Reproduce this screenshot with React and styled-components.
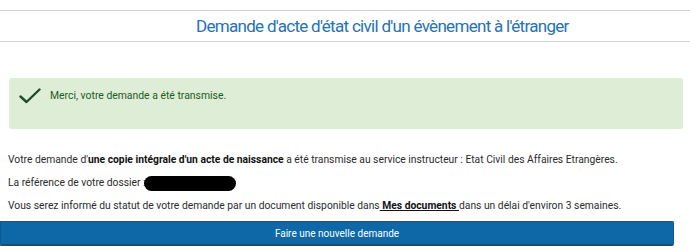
import React from "react";
import styled, { createGlobalStyle } from "styled-components";

const Global = createGlobalStyle`
  html, body { margin: 0; padding: 0; background: #fff; }
  body { font-family: Roboto, "Liberation Sans", sans-serif; }
`;

const Page = styled.div`
  width: 690px;
  height: 252px;
  overflow: hidden;
  padding-top: 10px;
  box-sizing: border-box;
`;

const Header = styled.header`
  border-top: 1px solid #d4d4d4;
  border-bottom: 1px solid #d4d4d4;
  height: 30px;
  display: flex;
  align-items: center;
  padding-left: 196px;
`;

const Title = styled.h1`
  margin: 0;
  font-family: Roboto, "Liberation Sans", sans-serif;
  font-weight: 400;
  font-size: 17px;
  color: #2472b5;
  letter-spacing: -0.7px;
`;

const Alert = styled.div`
  margin: 36px 7px 0 9px;
  height: 51px;
  box-sizing: border-box;
  background: #ddedd6;
  border-radius: 3px;
  display: flex;
  align-items: flex-start;
  padding: 10px 0 0 10px;
  gap: 9px;
`;

const AlertText = styled.span`
  font-size: 10.4px;
  color: #1d5a2a;
  line-height: 14px;
  padding-top: 1px;
`;

const Body = styled.div`
  margin-top: 19px;
  padding-left: 8px;
  font-size: 10.3px;
  color: #2b2b2b;
`;

const Line = styled.p`
  margin: 0;
  line-height: 23px;
  white-space: nowrap;
`;

const Strong = styled.b`
  font-weight: 700;
  color: #111;
`;

const Link = styled.a`
  color: #111;
  font-weight: 700;
  text-decoration: underline;
`;

const Redacted = styled.span`
  display: inline-block;
  width: 92px;
  height: 15px;
  background: #000;
  border-radius: 8px;
  vertical-align: middle;
  margin-left: -2px;
`;

const Button = styled.button`
  display: block;
  margin-top: 4px;
  width: 674px;
  height: 25px;
  background: #0e67a7;
  border: 1px solid #0b5a93;
  border-bottom: 2px solid #0a5188;
  border-radius: 0 2px 2px 0;
  color: #fff;
  font-family: Roboto, "Liberation Sans", sans-serif;
  font-size: 10px;
  padding: 0;
  cursor: pointer;
`;

const Check = () => (
  <svg width="22" height="16" viewBox="0 0 22 16" fill="none">
    <path d="M1.5 8.5 L7.5 14 L20.5 1.5" stroke="#1e4d2b" strokeWidth="2.4" strokeLinecap="round" strokeLinejoin="round" />
  </svg>
);

export default function App() {
  return (
    <Page>
      <Global />
      <Header>
        <Title>Demande d'acte d'état civil d'un évènement à l'étranger</Title>
      </Header>
      <Alert>
        <Check />
        <AlertText>Merci, votre demande a été transmise.</AlertText>
      </Alert>
      <Body>
        <Line>
          Votre demande d'<Strong>une copie intégrale d'un acte de naissance</Strong> a été transmise au service instructeur : Etat Civil des Affaires Etrangères.
        </Line>
        <Line>
          La référence de votre dossier :<Redacted />
        </Line>
        <Line>
          Vous serez informé du statut de votre demande par un document disponible dans<Link href="#"> Mes documents </Link>dans un délai d'environ 3 semaines.
        </Line>
      </Body>
      <Button>Faire une nouvelle demande</Button>
    </Page>
  );
}
